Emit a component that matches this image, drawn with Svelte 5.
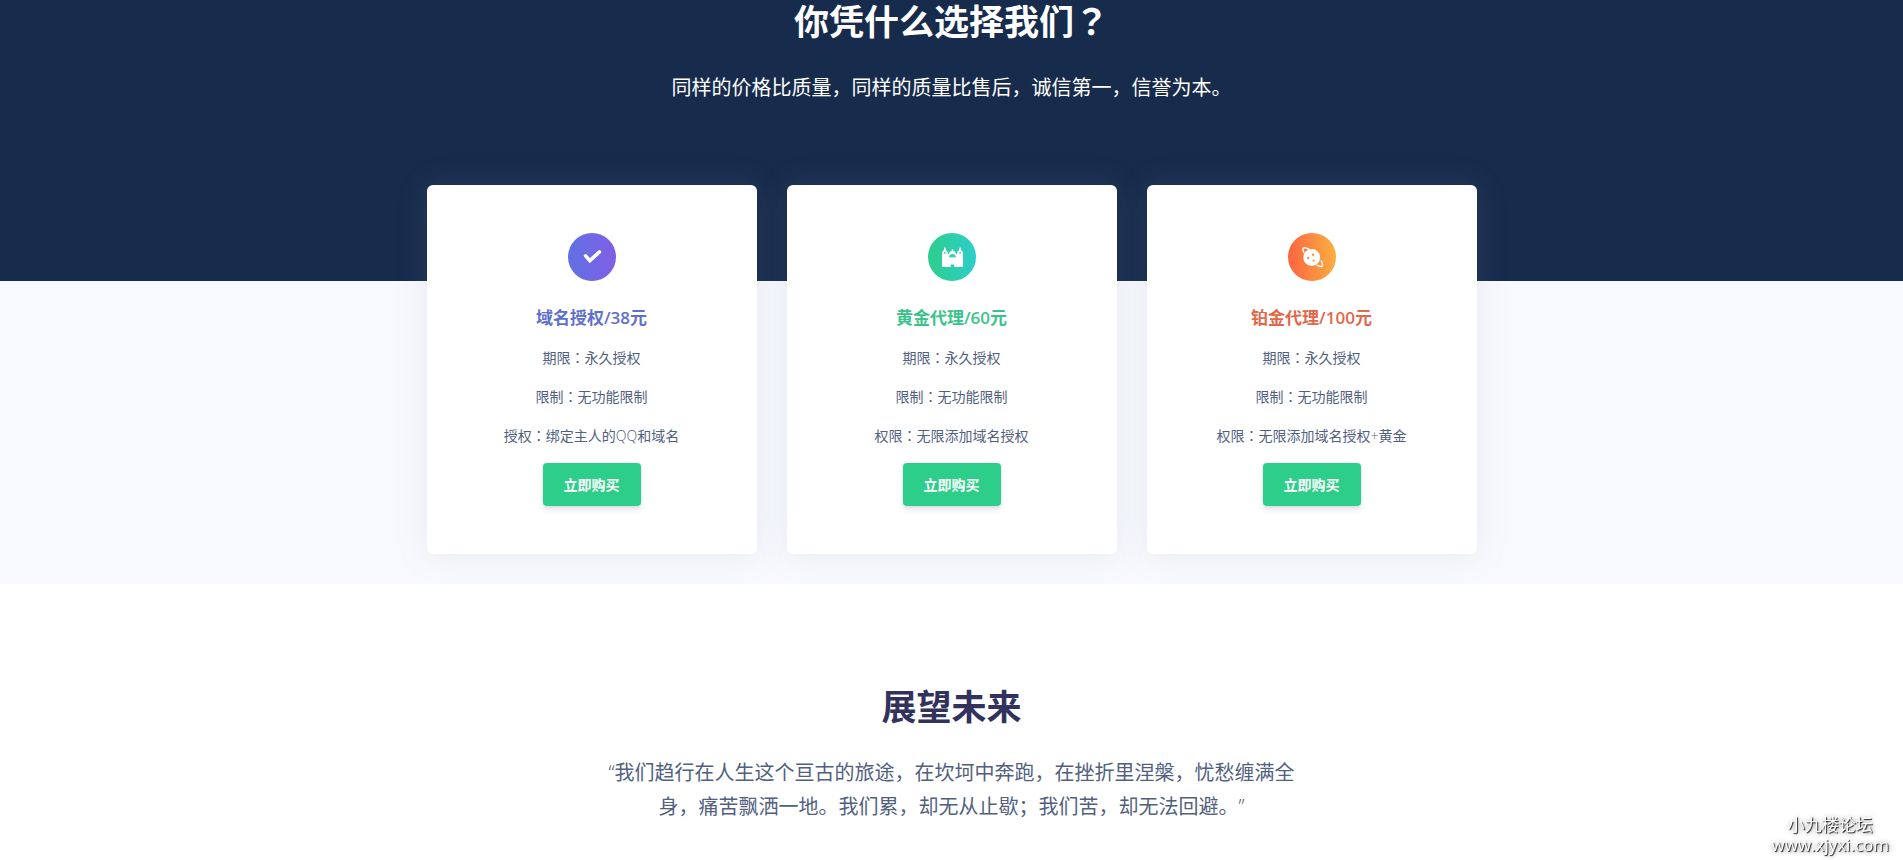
<script lang="ts">
  type Plan = {
    kind: "primary" | "success" | "warning"
    title: string
    lines: string[]
  }

  const plans: Plan[] = [
    {
      kind: "primary",
      title: "域名授权/38元",
      lines: ["期限：永久授权", "限制：无功能限制", "授权：绑定主人的QQ和域名"],
    },
    {
      kind: "success",
      title: "黄金代理/60元",
      lines: ["期限：永久授权", "限制：无功能限制", "权限：无限添加域名授权"],
    },
    {
      kind: "warning",
      title: "铂金代理/100元",
      lines: ["期限：永久授权", "限制：无功能限制", "权限：无限添加域名授权+黄金"],
    },
  ]

  // full-width marks that sit in the middle of their square
  function pieces(text: string): string[] {
    return text.split(/([：？])/).filter((p) => p !== "")
  }
</script>

{#snippet centred(text: string)}{#each pieces(text) as p}{#if "：？".includes(p)}<span class="mark">{p}</span>{:else}{p}{/if}{/each}{/snippet}

<section class="intro">
  <h2>{@render centred("你凭什么选择我们？")}</h2>
  <p class="lead">同样的价格比质量，同样的质量比售后，诚信第一，信誉为本。</p>
</section>

<section class="plans">
  <div class="cards">
    {#each plans as plan}
      <article class="card {plan.kind}">
        <div class="icon">
          <svg viewBox="0 0 48 48" aria-hidden="true">
            {#if plan.kind === "primary"}
              <path
                d="M17.6 22.9 L21.8 27.6 L31.4 19"
                fill="none"
                stroke="#fff"
                stroke-width="3.6"
                stroke-linecap="round"
                stroke-linejoin="miter"
              />
            {:else if plan.kind === "success"}
              <path
                fill="#fff"
                fill-rule="evenodd"
                d="M14 34 V19 L15.6 17.6 L16.9 13.6 L18.2 17.6 L19.8 19 V21 H21 C21.2 19.2 22.3 18.2 23.8 17.8 V16 H25.2 V17.8 C26.7 18.2 27.8 19.2 28 21 H29.2 V19 L30.8 17.6 L32.1 13.6 L33.4 17.6 L35 19 V34 H26.2 V31.4 H22.8 V34 Z M21 24.2 H28 C27.6 22.2 26.3 21 24.5 21 C22.7 21 21.4 22.2 21 24.2 Z M16.2 19 H17.6 V20.8 H16.2 Z M31.4 19 H32.8 V20.8 H31.4 Z"
              />
            {:else}
              <g fill="none" stroke="#fff" stroke-width="1.5" stroke-linecap="round">
                <path d="M15.8 19.2 C14.4 16.2 14.6 14.8 15.8 14.7 C17.2 14.5 19 15 21 16.2" />
                <path d="M33.3 28 C35 31 35 33 33.6 33.4 C32.2 33.7 30.6 33.2 28.8 32.2" />
              </g>
              <path
                fill="#fff"
                fill-rule="evenodd"
                d="M23.7 16.1 A8.4 8.4 0 1 1 23.7 32.9 A8.4 8.4 0 1 1 23.7 16.1 Z M25 20.5 a1.2 1.2 0 1 0 0.01 0 Z M20.2 23.8 a1.2 1.2 0 1 0 0.01 0 Z M25.6 26.4 a1.1 1.1 0 1 0 0.01 0 Z"
              />
            {/if}
          </svg>
        </div>
        <h3>{plan.title}</h3>
        {#each plan.lines as line}
          <p>{@render centred(line)}</p>
        {/each}
        <button type="button">立即购买</button>
      </article>
    {/each}
  </div>
</section>

<section class="future">
  <h2>展望未来</h2>
  <p class="lead">“我们趋行在人生这个亘古的旅途，在坎坷中奔跑，在挫折里涅槃，忧愁缠满全身，痛苦飘洒一地。我们累，却无从止歇；我们苦，却无法回避。”</p>
</section>

<aside class="stamp">
  <span>小九楼论坛</span>
  <span>www.xjyxi.com</span>
</aside>

<style>
  :global(body) {
    margin: 0;
    background: #fff;
    color: #525f7f;
    font-family: "Open Sans", "Noto Sans CJK SC", sans-serif;
    font-size: 14px;
    font-weight: 400;
    text-spacing-trim: space-all;
  }

  h2,
  h3,
  p {
    margin: 0;
  }

  p {
    font-family: "Open Sans Light", "Open Sans", "Noto Sans CJK SC", sans-serif;
  }

  h2 {
    font-size: 35px;
    font-weight: 700;
    line-height: 44px;
    margin-bottom: 27px;
  }

  .mark {
    font-family: "Open Sans", "Noto Sans CJK TC", sans-serif;
  }

  .lead {
    font-size: 20px;
    line-height: 34px;
  }

  .intro {
    background: #172b4d;
    color: #fff;
    text-align: center;
    padding-bottom: 176px;
  }

  .plans {
    background: #f8f9fe;
    padding: 0 15px 30px;
  }

  .cards {
    display: grid;
    grid-template-columns: repeat(3, 1fr);
    gap: 30px;
    max-width: 1050px;
    margin: 0 auto;
  }

  .card {
    display: flex;
    flex-direction: column;
    align-items: center;
    margin-top: -96px;
    padding: 48px 24px;
    background: #fff;
    border-radius: 6px;
    box-shadow: 0 0 32px rgba(136, 152, 170, 0.15);
    text-align: center;
  }

  .icon {
    width: 48px;
    height: 48px;
    margin-bottom: 24px;
    border-radius: 50%;
  }

  .icon svg {
    display: block;
    width: 100%;
    height: 100%;
  }

  .primary .icon {
    background: linear-gradient(87deg, #5e72e4, #825ee4);
  }

  .success .icon {
    background: linear-gradient(87deg, #2dce89, #2dcecc);
  }

  .warning .icon {
    background: linear-gradient(87deg, #fb6340, #fbb140);
  }

  h3 {
    font-size: 17px;
    font-weight: 600;
    line-height: 26px;
    margin-bottom: 15px;
  }

  .primary h3 {
    color: #5e70cf;
  }

  .success h3 {
    color: #38c388;
  }

  .warning h3 {
    color: #e2684a;
  }

  .card p {
    line-height: 23px;
    margin-bottom: 16px;
  }

  .card button {
    padding: 10px 21px;
    border: 0;
    border-radius: 4px;
    background: #2dce89;
    color: #fff;
    font: inherit;
    font-weight: 600;
    line-height: 23px;
    box-shadow: 0 4px 6px rgba(50, 50, 93, 0.11), 0 1px 3px rgba(0, 0, 0, 0.08);
    cursor: pointer;
  }

  .future {
    padding: 101px 15px 34px;
    text-align: center;
  }

  .future h2 {
    color: #32325d;
  }

  .future .lead {
    max-width: 700px;
    margin: 0 auto;
  }

  .stamp {
    position: fixed;
    right: 14px;
    bottom: 5px;
    display: flex;
    flex-direction: column;
    align-items: center;
    color: #fff;
    font-size: 17px;
    font-weight: 400;
    line-height: 20px;
    text-shadow: 1px 1px 1px #222, 1px 1px 5px rgba(0, 0, 0, 0.5);
  }
</style>
